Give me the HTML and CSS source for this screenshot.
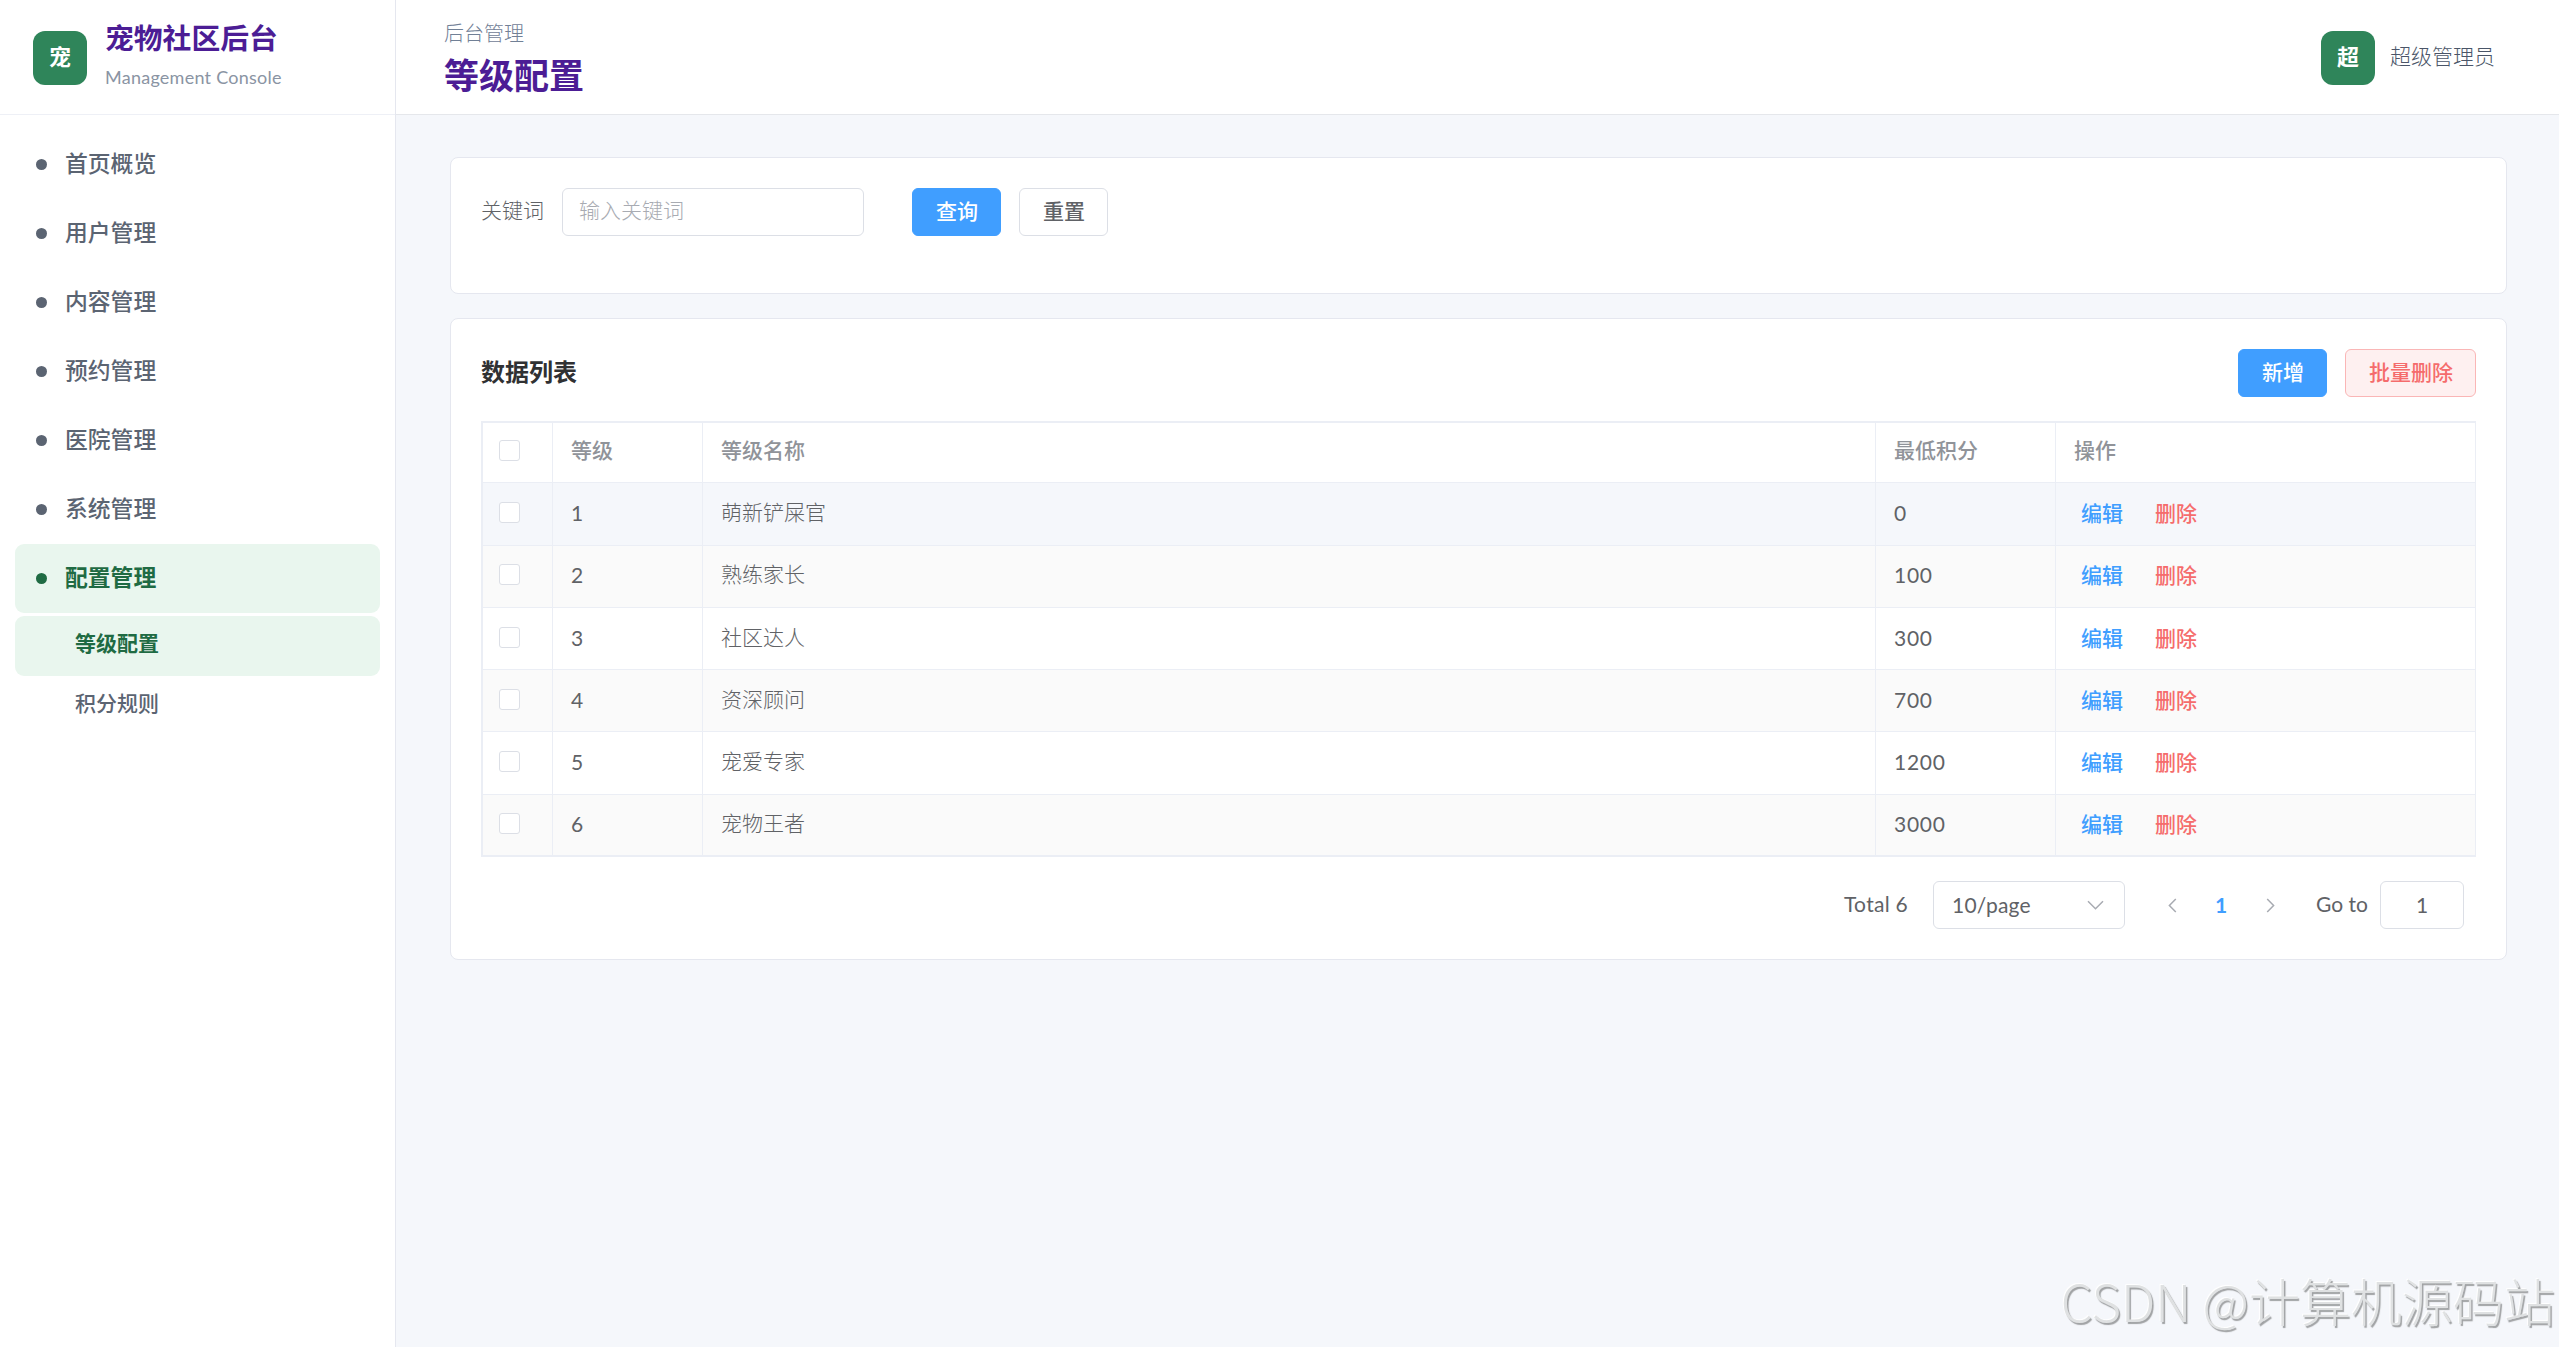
FILE: index.html
```html
<!DOCTYPE html>
<html lang="zh-CN">
<head>
<meta charset="utf-8">
<title>等级配置</title>
<link rel="stylesheet" href="styles.css">
</head>
<body>
<div class="layout">
  <aside class="sidebar">
    <div class="brand">
      <div class="badge">宠</div>
      <div class="brand-text">
        <div class="brand-title">宠物社区后台</div>
        <div class="brand-sub">Management Console</div>
      </div>
    </div>
    <nav class="nav">
      <a class="nav-item"><i class="dot"></i><span>首页概览</span></a>
      <a class="nav-item"><i class="dot"></i><span>用户管理</span></a>
      <a class="nav-item"><i class="dot"></i><span>内容管理</span></a>
      <a class="nav-item"><i class="dot"></i><span>预约管理</span></a>
      <a class="nav-item"><i class="dot"></i><span>医院管理</span></a>
      <a class="nav-item"><i class="dot"></i><span>系统管理</span></a>
      <a class="nav-item active"><i class="dot"></i><span>配置管理</span></a>
      <div class="subnav">
        <a class="sub-item active">等级配置</a>
        <a class="sub-item">积分规则</a>
      </div>
    </nav>
  </aside>
  <div class="main">
    <header class="topbar">
      <div class="heading">
        <div class="crumb">后台管理</div>
        <h1>等级配置</h1>
      </div>
      <div class="user">
        <div class="badge">超</div>
        <span>超级管理员</span>
      </div>
    </header>
    <main class="content">
      <section class="card search">
        <label>关键词</label>
        <div class="input">输入关键词</div>
        <button class="btn primary">查询</button>
        <button class="btn">重置</button>
      </section>
      <section class="card list">
        <div class="list-head">
          <h2>数据列表</h2>
          <div class="actions">
            <button class="btn primary">新增</button>
            <button class="btn danger">批量删除</button>
          </div>
        </div>
        <div class="table">
          <div class="row head"><div><i class="check"></i></div><div>等级</div><div>等级名称</div><div>最低积分</div><div>操作</div></div>
          <div class="row hover tall"><div><i class="check"></i></div><div>1</div><div>萌新铲屎官</div><div>0</div><div class="ops"><a>编辑</a><a class="del">删除</a></div></div>
          <div class="row striped raised"><div><i class="check"></i></div><div>2</div><div>熟练家长</div><div>100</div><div class="ops"><a>编辑</a><a class="del">删除</a></div></div>
          <div class="row"><div><i class="check"></i></div><div>3</div><div>社区达人</div><div>300</div><div class="ops"><a>编辑</a><a class="del">删除</a></div></div>
          <div class="row striped"><div><i class="check"></i></div><div>4</div><div>资深顾问</div><div>700</div><div class="ops"><a>编辑</a><a class="del">删除</a></div></div>
          <div class="row tall"><div><i class="check"></i></div><div>5</div><div>宠爱专家</div><div>1200</div><div class="ops"><a>编辑</a><a class="del">删除</a></div></div>
          <div class="row striped raised last"><div><i class="check"></i></div><div>6</div><div>宠物王者</div><div>3000</div><div class="ops"><a>编辑</a><a class="del">删除</a></div></div>
        </div>
        <div class="pagination">
          <span class="total">Total 6</span>
          <div class="select"><span>10/page</span>
            <svg width="17" height="11" viewBox="0 0 17 11"><path d="M1 1.2l7.5 7.6L16 1.2"/></svg>
          </div>
          <div class="pager">
            <span><svg width="9" height="15" viewBox="0 0 9 15"><path d="M7.8 1L1.4 7.5l6.4 6.500"/></svg></span>
            <span class="current">1</span>
            <span><svg width="9" height="15" viewBox="0 0 9 15"><path d="M1.200 1l6.400 6.500L1.200 14"/></svg></span>
          </div>
          <span class="goto">Go to</span>
          <div class="jump">1</div>
        </div>
      </section>
    </main>
  </div>
</div>
<div class="watermark">CSDN @计算机源码站</div>
</body>
</html>
```
FILE: styles.css
```css
* { box-sizing: border-box; }
body {
  margin: 0;
  font-family: Lato, "Noto Sans CJK SC", sans-serif;
  font-size: 21px;
  color: #606266;
  background: #f5f7fb;
  overflow: hidden;
}
h1, h2 { margin: 0; }
.layout { display: flex; height: 1347px; }

.sidebar { width: 396px; flex: none; background: #fff; border-right: 1px solid #e5e7ef; }
.brand {
  display: flex;
  align-items: center;
  gap: 18px;
  height: 115px;
  padding: 2px 33px 0;
  border-bottom: 1px solid #eef0f6;
}
.badge {
  width: 54px;
  height: 54px;
  flex: none;
  border-radius: 12px;
  background: #2f855a;
  color: #fff;
  font-weight: 700;
  font-size: 22px;
  line-height: 52px;
  text-align: center;
}
.brand-text { padding-bottom: 6px; }
.brand-title { font-size: 28.8px; line-height: 38px; font-weight: 700; color: #4c1d95; }
.brand-sub { margin-top: 6px; font-size: 18px; line-height: 28px; letter-spacing: 0.25px; color: #8a94a3; }

.nav { padding: 15px; }
.nav-item {
  display: flex;
  align-items: center;
  gap: 18px;
  height: 69px;
  padding: 0 21px;
  border-radius: 9px;
  font-size: 22.8px;
  font-weight: 500;
  color: #5b6472;
}
.nav-item span { line-height: 66px; height: 69px; }
.dot { width: 11px; height: 11px; border-radius: 50%; background: currentColor; }
.nav-item.active, .sub-item.active { background: #e9f6ee; color: #1f6b43; font-weight: 600; }
.subnav { margin-top: 3px; }
.sub-item {
  display: block;
  height: 60px;
  padding-left: 60px;
  border-radius: 9px;
  line-height: 54px;
  font-weight: 500;
  color: #5b6472;
}

.main { flex: 1; min-width: 0; }
.topbar {
  display: flex;
  align-items: center;
  justify-content: space-between;
  height: 115px;
  padding: 2px 64px 0 48px;
  background: #fff;
  border-bottom: 1px solid #e5e7eb;
}
.crumb { font-size: 20px; line-height: 30px; font-weight: 300; color: #718096; }
h1 { margin-top: 3px; font-size: 35px; line-height: 48px; font-weight: 700; color: #4c1d95; }
.user { display: flex; align-items: center; gap: 15px; font-weight: 300; color: #4a5568; }
.user span { line-height: 49px; height: 54px; }

.content { display: flex; flex-direction: column; gap: 24px; padding: 42px 52px 0 54px; }
.card { padding: 30px; border: 1px solid #e5e7ef; border-radius: 8px; background: #fff; }
.search { display: flex; height: 137px; }
.search label { width: 81px; line-height: 44px; font-weight: 300; }
.input {
  width: 302px;
  height: 48px;
  margin-right: 48px;
  padding-left: 16px;
  border: 1.5px solid #dcdfe6;
  border-radius: 6px;
  line-height: 42px;
  font-weight: 300;
  color: #a8abb2;
}
.btn {
  width: 89px;
  height: 48px;
  padding: 0 0 3px 1px;
  border: 1px solid #dcdfe6;
  border-radius: 6px;
  background: #fff;
  font: 500 21px/43px "Noto Sans CJK SC", sans-serif;
  color: #606266;
}
.btn + .btn { margin-left: 18px; }
.btn.primary { border-color: #409eff; background: #409eff; color: #fff; }
.btn.danger { width: 131px; border-color: #fab6b6; background: #fef0f0; color: #f56c6c; }

.list { height: 642px; }
.list-head { display: flex; justify-content: space-between; height: 72px; }
.actions { display: flex; }
h2 { font-size: 24px; line-height: 46px; font-weight: 600; color: #303133; }

.table { border: solid #ebeef5; border-width: 2px 0 0 2px; }
.row { display: grid; grid-template-columns: 70px 150px 1173px 180px 1fr; height: 62px; }
.row > div {
  height: 100%;
  min-height: 0;
  padding-left: 18px;
  border: solid #ebeef5;
  border-width: 0 1px 1px 0;
  line-height: 58px;
  font-weight: 300;
}
.row > div:nth-child(2), .row > div:nth-child(4) { font-weight: 400; line-height: 59px; letter-spacing: 0.7px; }
.row > div:first-child { padding: 19px 0 0 16px; }
.row > .ops { display: flex; gap: 32px; padding-left: 25px; line-height: 60px; font-weight: 500; color: #409eff; }
.ops .del { color: #f56c6c; }
.row.raised > div { line-height: 56px; }
.row.raised > div:nth-child(2), .row.raised > div:nth-child(4) { line-height: 58px; }
.row.raised > .ops { line-height: 58px; }
.row.raised > div:first-child { padding-top: 18px; }
.row.head { height: 60px; }
.row.head > div { line-height: 53px; font-weight: 500; color: #909399; letter-spacing: 0; }
.row.head > div:nth-child(2), .row.head > div:nth-child(4) { font-weight: 500; line-height: 53px; letter-spacing: 0; }
.row.head > div:first-child { padding-top: 17px; }
.row.tall { height: 63px; }
.row.last > div { border-bottom-width: 2px; }
.row.striped { background: #fafafa; }
.row.hover { background: #f5f7fb; }
.check { display: block; width: 21px; height: 21px; border: 1px solid #dcdfe6; border-radius: 3px; background: #fff; }

.pagination { display: flex; justify-content: flex-end; height: 48px; margin-top: 24px; padding-right: 12px; line-height: 46px; }
.total { margin-right: 25px; letter-spacing: 0.3px; }
.select {
  display: flex;
  align-items: center;
  justify-content: space-between;
  width: 192px;
  height: 48px;
  padding: 0 20px 0 18px;
  border: 1.5px solid #dcdfe6;
  border-radius: 6px;
  letter-spacing: 0.2px;
}
svg { display: block; fill: none; stroke: #a8abb2; stroke-width: 1.5; }
.pager { display: flex; align-items: center; margin: 0 22px 0 22px; }
.pager span { display: flex; align-items: center; justify-content: center; width: 48px; height: 48px; margin-left: 1px; }
.pager .current { font-weight: 700; color: #409eff; }
.goto { margin-right: 12px; }
.jump { width: 84px; height: 48px; border: 1.5px solid #dcdfe6; border-radius: 6px; text-align: center; }

.watermark {
  position: absolute;
  right: 4px;
  bottom: 9px;
  font: 300 51px/75px "Noto Sans CJK SC", sans-serif;
  white-space: nowrap;
  color: #dfe1e2;
  text-shadow: 1.5px 1.5px 1px #a0a2a4, -1px -1px 1px #fff;
}
```
